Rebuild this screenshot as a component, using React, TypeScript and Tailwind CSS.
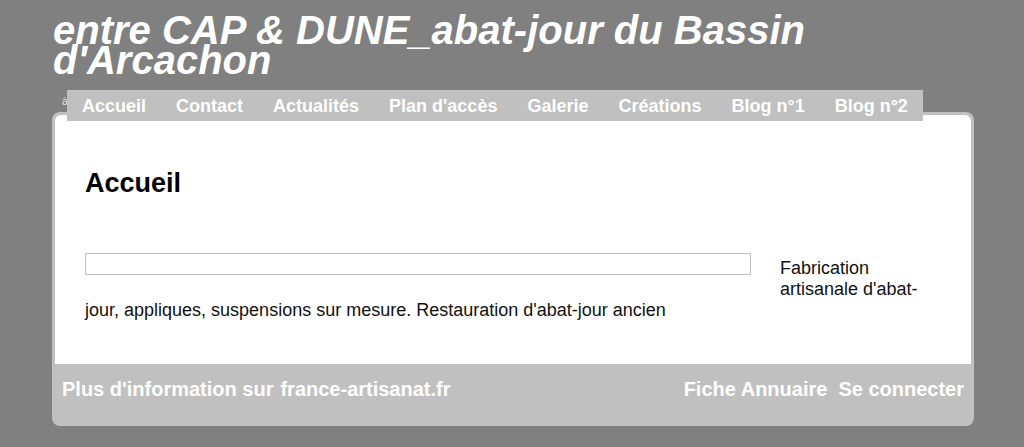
const NAV = ["Accueil", "Contact", "Actualités", "Plan d'accès", "Galerie", "Créations", "Blog n°1", "Blog n°2"];

export default function App() {
  return (
    <div className="min-h-[447px] bg-[#808080] font-['Liberation_Sans',Arial,sans-serif] pl-[52px] pr-[50px] pt-[15px]">
      <h1 className="pl-[1px] text-[40px] leading-[30px] font-bold italic text-white">
        entre CAP &amp; DUNE_abat-jour du Bassin d'Arcachon
      </h1>

      <div className="relative mt-[15px] pl-[15px]">
        <span className="absolute left-[10px] top-[6px] text-[11px] leading-none text-[#e0e0e0]">à</span>
        <nav className="relative z-10 flex w-fit bg-[#c0c0c0] pt-[1px]">
          {NAV.map((n) => (
            <a key={n} className="px-[15px] text-[18px] leading-[30px] font-bold text-white">
              {n}
            </a>
          ))}
        </nav>
      </div>

      <div className="-mt-[9px] rounded-[8px] bg-[#c0c0c0] p-[3px] pb-0">
        <div className="rounded-t-[6px] bg-white px-[30px] pt-[53px] pb-[43px]">
          <h2 className="text-[27px] leading-[31px] font-bold text-black">Accueil</h2>
          <p className="mt-[59px] text-[18px] leading-[21px] text-[#111]">
            <span className="float-left -mt-[5px] mr-[29px] mb-[10px] h-[22px] w-[666px] border border-[#c0c0c0]" />
            Fabrication artisanale d'abat-jour, appliques, suspensions sur mesure. Restauration d'abat-jour ancien
          </p>
        </div>
        <div className="flex h-[62px] items-start justify-between px-[7px] pt-[14px] text-[20px] leading-[23px] font-bold text-white">
          <div className="flex gap-[7px]">
            <a>Plus d'information sur</a>
            <a>france-artisanat.fr</a>
          </div>
          <div className="flex gap-[11px]">
            <a>Fiche Annuaire</a>
            <a>Se connecter</a>
          </div>
        </div>
      </div>
    </div>
  );
}
